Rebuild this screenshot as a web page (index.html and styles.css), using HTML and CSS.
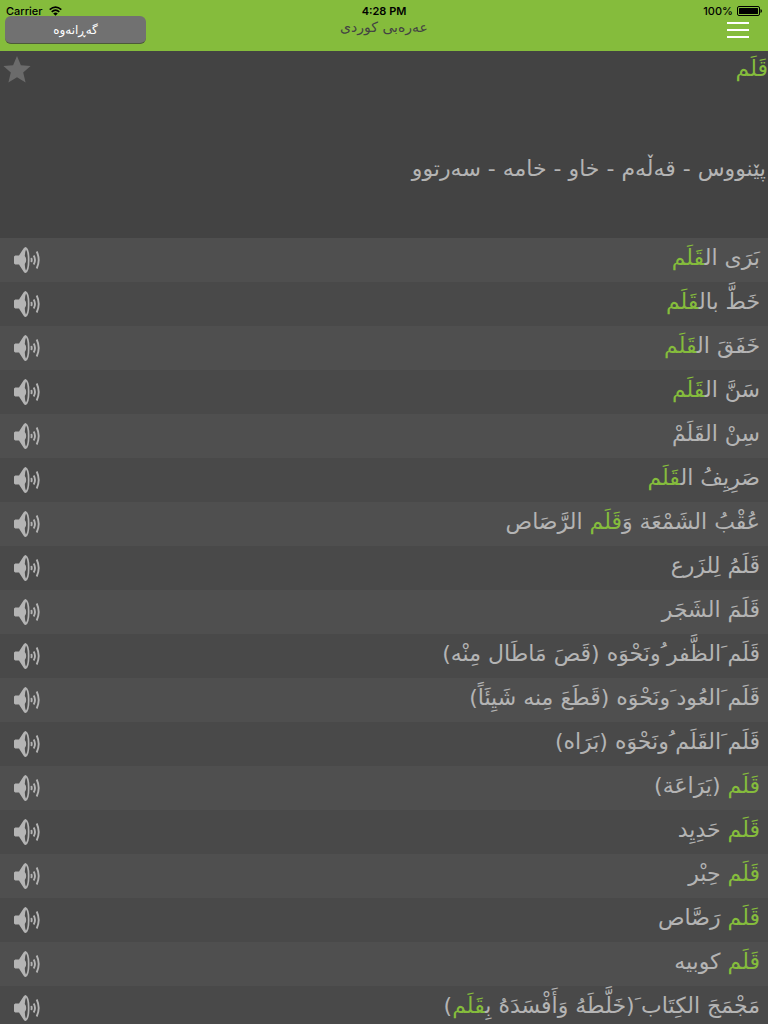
FILE: index.html
```
<!DOCTYPE html>
<html lang="ar">
<head>
    <meta charset="UTF-8">
    <meta name="viewport" content="width=device-width, initial-scale=1.0">
    <title>عەرەبی کوردی</title>
    <link rel="stylesheet" href="styles.css">
</head>
<body>
    <svg class="defs" aria-hidden="true">
        <symbol id="speaker" viewBox="0 0 26 26">
            <path fill="#b4b4b4" d="M0 9.500L1.200 8.400H5L9.500 1.500Q10.500 0 11.700 0Q15.500 1.500 15.500 13Q15.500 24.500 11.700 26Q10.500 26 9.500 24.500L5 17.600H1.200L0 16.500Z"/>
            <path fill="#4d4d4d" d="M12 2.500Q13.800 5 13.800 13Q13.800 21 12 23.500Q11 22 10.800 17Q12.200 15.500 12.200 13Q12.200 10.500 10.800 9Q11 4.500 12 2.500Z"/>
            <path fill="none" stroke="#b4b4b4" stroke-width="1.900" d="M17.200 11Q18.200 13 17.200 15M19.700 8.500Q22.300 13 19.700 17.500M22.700 4.500Q26.700 13 22.700 21.500"/>
        </symbol>
    </svg>
    <header>
        <div class="status">
            <span class="carrier">Carrier
                <svg width="13" height="10" viewBox="0 0 13 10">
                    <path fill="none" stroke="#000" stroke-width="1.600" d="M.7 3.700Q6.500-1.600 12.300 3.700M2.700 5.800Q6.500 2.300 10.300 5.800"/>
                    <path d="M4.200 7.400Q6.500 5.400 8.800 7.400L6.500 9.800Z"/>
                </svg>
            </span>
            <span class="time">4:28 PM</span>
            <span class="battery">100%
                <svg width="25" height="10" viewBox="0 0 25 10">
                    <rect x=".5" y=".5" width="22" height="9" rx="1.500" fill="none" stroke="#000"/>
                    <rect x="2" y="2" width="19" height="6" rx=".5"/>
                    <path d="M23.500 3Q25 3.500 25 5Q25 6.500 23.500 7Z"/>
                </svg>
            </span>
        </div>
        <div class="nav">
            <button class="back" type="button" dir="rtl">گەڕانەوە</button>
            <h1 dir="rtl">عەرەبی کوردی</h1>
            <button class="menu" type="button" aria-label="Menu"><i></i><i></i><i></i></button>
        </div>
    </header>
    <section class="word" dir="rtl">
        <div class="top">
            <h2>قَلَم</h2>
            <button class="star" type="button" aria-label="Favourite">
                <svg width="28" height="27" viewBox="0 0 28 27">
                    <path fill="#6b6b6b" d="M14 0L17.900 9.300L27.600 10L20.200 16.500L22.600 26.500L14 21.200L5.400 26.500L7.800 16.500L.4 10L10.100 9.300Z"/>
                </svg>
            </button>
        </div>
        <p>پێنووس - قەڵەم - خاو - خامە - سەرتوو</p>
    </section>
    <ul dir="rtl">
        <li><span>بَرَى ال<b>قَلَم</b></span></li>
        <li><span>خَطَّ بال<b>قَلَم</b></span></li>
        <li><span>خَفَقَ ال<b>قَلَم</b></span></li>
        <li><span>سَنَّ ال<b>قَلَم</b></span></li>
        <li><span>سِنْ القَلَمْ</span></li>
        <li><span>صَرِيِفُ ال<b>قَلَم</b></span></li>
        <li><span>عُقْبُ الشَمْعَة وَ<b>قَلَم</b> الرَّصَاص</span></li>
        <li><span>قَلَمُ لِلزَرع</span></li>
        <li><span>قَلَمَ الشَجَر</span></li>
        <li><span>قَلَم َالظَّفر ُونَحْوَه (قَصَ مَاطَال مِنْه)</span></li>
        <li><span>قَلَم َالعُود َونَحْوَه (قَطَعَ مِنه شَيِئَاً)</span></li>
        <li><span>قَلَم َالقَلَم ُونَحْوَه (بَرَاه)</span></li>
        <li><span><b>قَلَم</b> (يَرَاعَة)</span></li>
        <li><span><b>قَلَم</b> حَدِيِد</span></li>
        <li><span><b>قَلَم</b> حِبْر</span></li>
        <li><span><b>قَلَم</b> رَصَّاص</span></li>
        <li><span><b>قَلَم</b> كوبيه</span></li>
        <li><span>مَجْمَجَ الكِتَاب َ(خَلَّطَهُ وَأَفْسَدَهُ بِ<b>قَلَم</b>)</span></li>
    </ul>
    <script>
        function addSound() {
            var oLi = document.getElementsByTagName('li');
            for (var i = 0; i < oLi.length; i ++) {
                oLi[i].insertAdjacentHTML('beforeend', '<button class="sound" type="button" aria-label="Play"><svg width="26" height="26"><use href="#speaker"/></svg></button>');
            }
        }
        addSound();
    </script>
</body>
</html>
```
FILE: styles.css
```
*{
    padding: 0;
    margin: 0;
    list-style: none;
    box-sizing: border-box;
}
body{
    height: 100vh;
    overflow: hidden;
    background-color: #434343;
    color: #b4b4b4;
    font-family: "DejaVu Sans", sans-serif;
    font-size: 22px;
}
button{
    border: 0;
    background: none;
    font-family: inherit;
}
svg{
    display: block;
}
.defs{
    display: none;
}
header{
    height: 51px;
    background-color: #85bc3c;
}
.status{
    display: grid;
    grid-template-columns: 1fr auto 1fr;
    align-items: center;
    height: 16px;
    padding: 5px 6px 0;
    color: #000;
    font: 11px/12px "Inter", "Liberation Sans", sans-serif;
    font-weight: 500;
}
.carrier, .battery{
    display: flex;
    align-items: center;
    gap: 6px;
}
.time{
    font-weight: 600;
}
.battery{
    justify-content: flex-end;
    gap: 4px;
}
.nav{
    display: grid;
    grid-template-columns: 1fr auto 1fr;
    align-items: start;
    padding: 0 5px;
}
.back{
    width: 141px;
    height: 28px;
    border-bottom: 1px solid #4c5a38;
    border-radius: 6px;
    background-color: #717171;
    color: #fff;
    font-size: 12px;
}
.nav h1{
    color: #434343;
    font-size: 14px;
    font-weight: normal;
    line-height: 22px;
}
.menu{
    justify-self: end;
    display: grid;
    gap: 5px;
    padding: 6px 14px;
}
.menu i{
    width: 22px;
    height: 2px;
    background-color: #fff;
}
.word{
    height: 187px;
}
.top{
    display: flex;
    justify-content: space-between;
    align-items: flex-start;
    height: 100px;
}
.top h2{
    color: #85bc3c;
    font-size: 22px;
    font-weight: normal;
    line-height: 36px;
}
.star{
    padding: 5px 3px;
}
.word p{
    padding-right: 2px;
    line-height: 36px;
}
li{
    display: flex;
    justify-content: space-between;
    height: 44px;
    padding: 0 8px 0 14px;
    background-color: #494949;
    line-height: 40px;
    white-space: nowrap;
}
li:nth-child(odd){
    background-color: #4f4f4f;
}
li b{
    color: #85bc3c;
    font-weight: normal;
}
```
